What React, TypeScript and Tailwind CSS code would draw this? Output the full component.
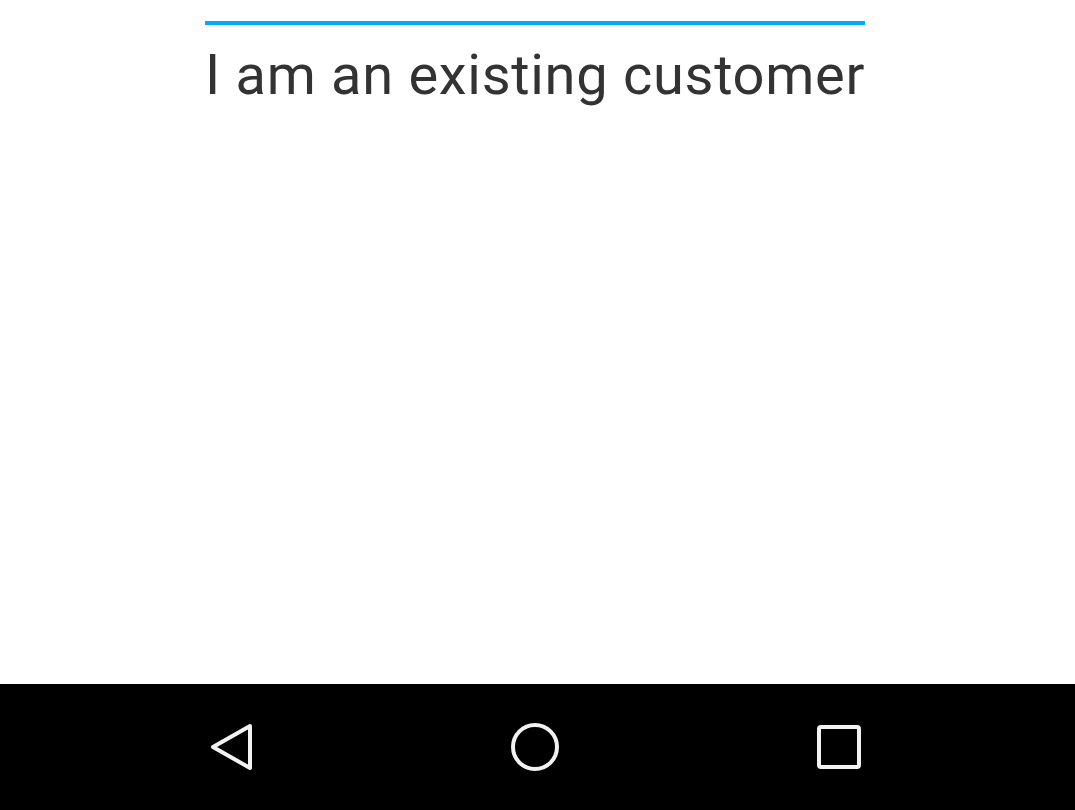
export default function App() {
  return (
    <div className="flex h-[810px] w-[1075px] flex-col bg-white" style={{ fontFamily: "Roboto, 'Noto Sans', sans-serif" }}>
      <div className="flex flex-1 flex-col pl-[205px]">
        <div className="mt-[21px] h-[4px] w-[660px] bg-[#03a9f4]" />
        <p className="mt-[10px] w-[660px] whitespace-nowrap text-[56px] leading-[80px] tracking-[0.7px] text-[#333333]">
          I am an existing customer
        </p>
      </div>
      <nav className="relative flex h-[126px] items-center bg-black">
        <div className="flex w-full items-center justify-between pl-[208px] pr-[213px]">
          <svg width="48" height="48" viewBox="0 0 48 48" fill="none" stroke="#f2f2f2" strokeWidth="4" strokeLinejoin="round">
            <path d="M42 3 L5 24 L42 45 Z" />
          </svg>
          <svg width="52" height="52" viewBox="0 0 52 52" fill="none" stroke="#f2f2f2" strokeWidth="4">
            <circle cx="25" cy="26" r="22" />
          </svg>
          <svg width="46" height="46" viewBox="0 0 46 46" fill="none" stroke="#f2f2f2" strokeWidth="4" strokeLinejoin="round">
            <rect x="3" y="3" width="40" height="40" rx="2" />
          </svg>
        </div>
      </nav>
    </div>
  )
}
